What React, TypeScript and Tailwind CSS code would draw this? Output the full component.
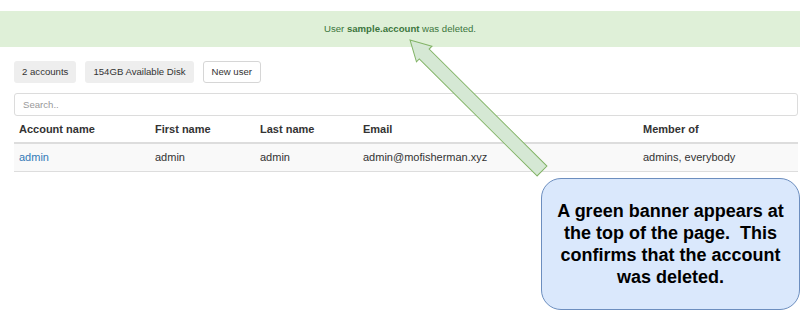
import React from 'react';

const FONT = "font-['Liberation_Sans',Arial,Helvetica,sans-serif]";

interface Account {
  name: string;
  first: string;
  last: string;
  email: string;
  groups: string;
}

const accounts: Account[] = [
  { name: 'admin', first: 'admin', last: 'admin', email: 'admin@mofisherman.xyz', groups: 'admins, everybody' },
];

// Annotation arrow, drawn pointing right then rotated onto the banner text
function Arrow() {
  const L = 186;
  const pts = `0,-7 ${L - 20},-7 ${L - 20},-11 ${L},0 ${L - 20},11 ${L - 20},7 0,7`;
  return (
    <svg className="absolute left-0 top-0 pointer-events-none" width="801" height="311">
      <g transform="translate(542 171) rotate(-135.2)">
        <polygon points={pts} fill="#d5e8d4" stroke="#82b366" strokeWidth="1" />
      </g>
    </svg>
  );
}

export default function App() {
  return (
    <div className={`relative w-[801px] h-[311px] overflow-hidden bg-white text-[#333] ${FONT}`}>
      <div className="pt-[11px]">
        {/* Banner */}
        <div className="h-[36px] w-[800px] bg-[#dff0d8] text-[#3c763d] text-[9.6px] flex items-center justify-center">
          <span>
            User <b>sample.account</b> was deleted.
          </span>
        </div>

        <div className="pl-[14px] pr-[3px]">
          {/* Toolbar */}
          <div className="mt-[14px] flex gap-[9px] text-[9.6px]">
            <div className="h-[22px] px-[8px] flex items-center rounded-[3px] bg-[#eeeeee]">2 accounts</div>
            <div className="h-[22px] px-[8px] flex items-center rounded-[3px] bg-[#eeeeee]">154GB Available Disk</div>
            <button className="h-[22px] px-[8px] flex items-center rounded-[3px] bg-white border border-[#d6d6d6]">
              New user
            </button>
          </div>

          {/* Search */}
          <input
            className="mt-[10px] block w-full h-[23px] px-[8px] rounded-[3px] border border-[#dcdcdc] text-[9.6px] placeholder:text-[#999] outline-none"
            placeholder="Search.."
          />

          {/* Table */}
          <table className="w-full text-[11px] border-collapse">
            <thead>
              <tr className="h-[27px] border-b-2 border-[#dddddd]">
                <th className="w-[136px] px-[5px] text-left font-bold">Account name</th>
                <th className="w-[105px] px-[5px] text-left font-bold">First name</th>
                <th className="w-[103px] px-[5px] text-left font-bold">Last name</th>
                <th className="w-[280px] px-[5px] text-left font-bold">Email</th>
                <th className="px-[5px] text-left font-bold">Member of</th>
              </tr>
            </thead>
            <tbody>
              {accounts.map((a) => (
                <tr key={a.name} className="h-[28px] bg-[#f9f9f9] border-b border-[#dddddd]">
                  <td className="px-[5px] text-[#337ab7]">{a.name}</td>
                  <td className="px-[5px]">{a.first}</td>
                  <td className="px-[5px]">{a.last}</td>
                  <td className="px-[5px]">{a.email}</td>
                  <td className="px-[5px]">{a.groups}</td>
                </tr>
              ))}
            </tbody>
          </table>
        </div>
      </div>

      <Arrow />

      {/* Callout */}
      <div className="absolute left-[541px] top-[178px] w-[259px] h-[132px] rounded-[20px] bg-[#dae8fc] border border-[#6c8ebf] flex items-center justify-center text-center text-black text-[18px] leading-[22px] font-bold">
        <p>
          A green banner appears at
          <br />
          the top of the page.&nbsp; This
          <br />
          confirms that the account
          <br />
          was deleted.
        </p>
      </div>
    </div>
  );
}
